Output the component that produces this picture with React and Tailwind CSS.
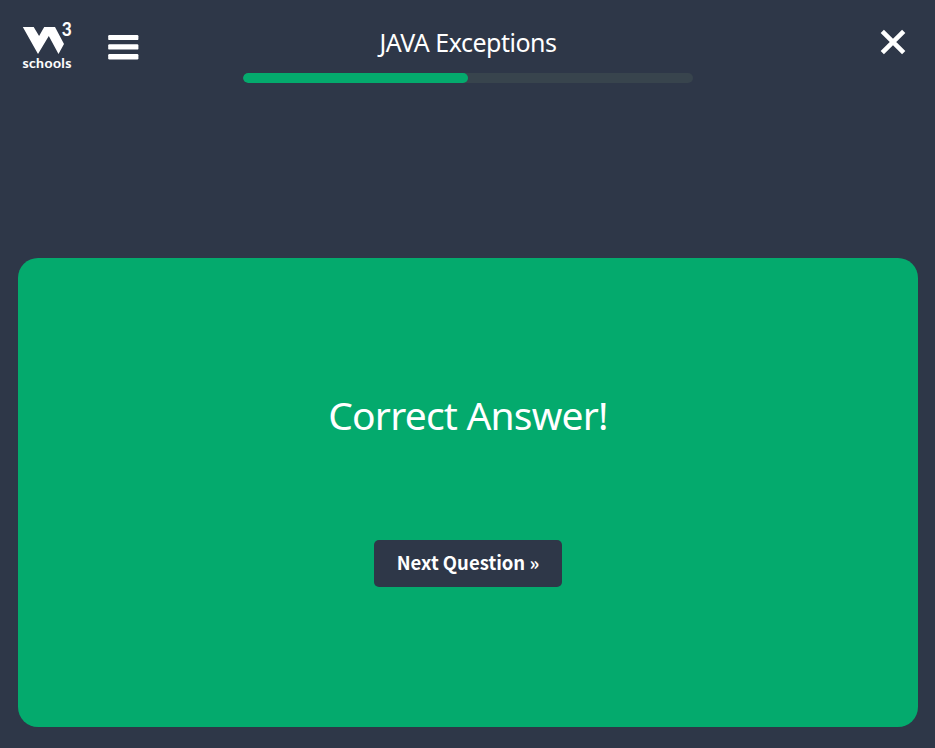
function Logo() {
  return (
    <svg className="h-[50px] w-[54px] overflow-visible" viewBox="20 21 54 50" fill="#fff" role="img" aria-label="W3Schools">
      <path d="M22.8 27H33.7L39.1 36L44.2 27H55L64 44L58.5 54L48.8 36L38 54Z" />
      <text className="font-['Lato',sans-serif] text-[18px] font-bold" x="61.7" y="36" textLength="10" lengthAdjust="spacingAndGlyphs" stroke="#fff" strokeWidth="0.1">3</text>
      <text className="font-['Lato',sans-serif] text-[14px] font-bold" x="22.4" y="68" textLength="49" lengthAdjust="spacing" stroke="#fff" strokeWidth="0.1">schools</text>
    </svg>
  );
}

export default function App() {
  return (
    <div className="flex h-[748px] w-[935px] flex-col overflow-hidden bg-[#2e3748] font-['Noto_Sans',sans-serif] text-white">
      <header className="grid h-[258px] grid-cols-[243px_450px_1fr] items-start">
        <div className="flex items-start pl-5 pt-[21px]">
          <Logo />
          <button className="ml-[34px] mt-[13px]" aria-label="Menu">
            <svg className="h-[27px] w-[32px]" viewBox="0 0 32 27" fill="#fff">
              <rect x="0.2" y="1" width="30.2" height="5.1" rx="1.2" />
              <rect x="0.2" y="10.2" width="30.2" height="5.4" rx="1.2" />
              <rect x="0.2" y="20" width="30.2" height="5.4" rx="1.2" />
            </svg>
          </button>
        </div>
        <div className="pt-[25px]">
          <h1 className="h-12 whitespace-nowrap text-center text-[25px] leading-[35px] tracking-[-0.5px]">JAVA Exceptions</h1>
          <div className="h-[10px] overflow-hidden rounded-[5px] bg-[#38444d]">
            <div className="h-full w-1/2 rounded-[5px] bg-[#04aa6d]" />
          </div>
        </div>
        <button className="ml-auto mr-[29px] mt-[29px]" aria-label="Close">
          <svg className="h-[26px] w-[26px]" viewBox="0 0 26 26" stroke="#fff" strokeWidth="4.6">
            <path d="M2.3 2.3L23.7 23.7M23.7 2.3L2.3 23.7" />
          </svg>
        </button>
      </header>
      <main className="mx-[18px] flex h-[469px] w-[900px] flex-col items-center rounded-[20px] bg-[#04aa6d] pt-[127px]">
        <h2 className="whitespace-nowrap text-[39px] leading-[59px] tracking-[-0.8px]">Correct Answer!</h2>
        <button className="mt-[96px] h-[47px] w-[188px] whitespace-nowrap rounded-[5px] bg-[#2e3748] pb-[3px] font-['Noto_Sans_CJK_SC',sans-serif] text-[18.5px] font-bold leading-[44px]">
          Next Question »
        </button>
      </main>
    </div>
  );
}
